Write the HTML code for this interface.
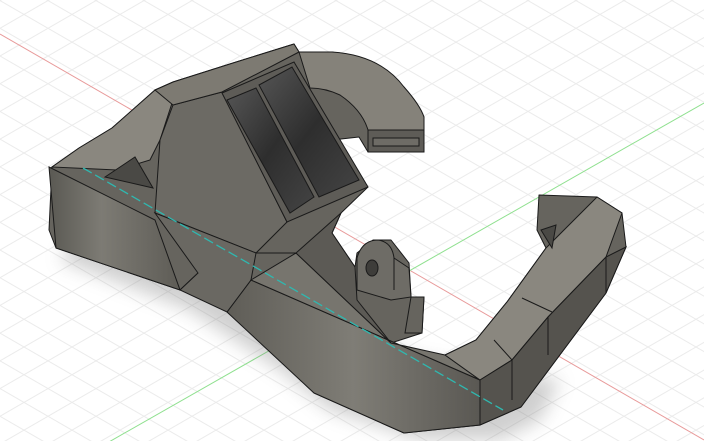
<!DOCTYPE html>
<html><head><meta charset="utf-8"><style>html,body{margin:0;padding:0;background:#fff}svg{display:block}</style></head>
<body>
<svg width="704" height="441" viewBox="0 0 704 441" xmlns="http://www.w3.org/2000/svg">
<defs>
<pattern id="ga" width="400" height="24" patternUnits="userSpaceOnUse" patternTransform="rotate(30)">
<line x1="0" y1="0.5" x2="400" y2="0.5" stroke="#ebebeb" stroke-width="1"/>
</pattern>
<pattern id="gb" width="400" height="24" patternUnits="userSpaceOnUse" patternTransform="rotate(-30)">
<line x1="0" y1="0.5" x2="400" y2="0.5" stroke="#ebebeb" stroke-width="1"/>
</pattern>
<filter id="bl" x="-20%" y="-20%" width="140%" height="140%"><feGaussianBlur stdDeviation="9"/></filter>
<linearGradient id="slot" x1="0" y1="0" x2="1" y2="1"><stop offset="0" stop-color="#555"/><stop offset="0.5" stop-color="#2e2e2e"/><stop offset="1" stop-color="#444"/></linearGradient>
<linearGradient id="side" x1="0" y1="0" x2="1" y2="0"><stop offset="0" stop-color="#5a5953"/><stop offset="0.4" stop-color="#7d7b74"/><stop offset="1" stop-color="#5e5c56"/></linearGradient>
<linearGradient id="uf" x1="0" y1="0" x2="1" y2="0"><stop offset="0" stop-color="#5f5d57"/><stop offset="0.5" stop-color="#7f7d76"/><stop offset="1" stop-color="#5a5853"/></linearGradient>
</defs>
<rect width="704" height="441" fill="#fff"/>
<rect width="704" height="441" fill="url(#ga)"/>
<rect width="704" height="441" fill="url(#gb)"/>
<line x1="0" y1="34" x2="704" y2="440" stroke="#e89a9a" stroke-width="1"/>
<line x1="704" y1="103" x2="72" y2="463" stroke="#8fe08f" stroke-width="1"/>
<g filter="url(#bl)" opacity="0.35">
<polygon points="60,260 190,310 280,370 330,410 420,440 500,440 540,420 560,380 420,360 300,300 200,270 80,230" fill="#777"/>
</g>
<polygon fill="#66645e" stroke="#1a1a1a" stroke-width="1" stroke-linejoin="round" points="49,230 56,248 180,290 198,273 227,312 269,350 314,393 404,433 480,425 521,407 606,293 626,247 622,213 597,197 539,195 537,230 546,248 507,302 476,340 445,355 413,355 391,343 422,333 424,297 411,297 409,263 391,240 373,240 357,253 355,267 332,233 341,213 368,187 359,178 332,140 359,137 368,152 424,152 424,117 404,87 368,60 332,52 299,52 294,44 233,63 173,82 155,90 112,128 79,148 52,167"/>
<polygon fill="url(#side)" stroke="#1a1a1a" stroke-width="1" points="49,167 155,220 180,290 56,248"/>
<polygon fill="#8a877f" stroke="#1a1a1a" stroke-width="1" points="79,148 112,128 155,90 173,100 160,140 150,160 117,170 52,167"/>
<polygon fill="#4a4945" stroke="#1a1a1a" stroke-width="1" points="105,177 135,157 153,188"/>
<polygon fill="#6c6a64" stroke="#1a1a1a" stroke-width="1" points="173,105 222,92 287,222 256,253 155,213 160,140"/>
<polygon fill="#7d7a72" stroke="#1a1a1a" stroke-width="1" points="155,90 173,82 233,63 294,44 299,52 222,92 173,105"/>
<polygon fill="#5e5c57" stroke="#1a1a1a" stroke-width="1" points="222,93 294,62 368,187 287,222"/>
<polygon fill="url(#slot)" stroke="#1a1a1a" stroke-width="1" points="227,100 256,88 314,197 290,213"/>
<polygon fill="url(#slot)" stroke="#1a1a1a" stroke-width="1" points="259,85 292,67 359,180 319,197"/>
<polygon fill="url(#uf)" stroke="#1a1a1a" stroke-width="1" points="227,312 251,280 480,380 480,425 404,433 314,393"/>
<polygon fill="#6a6862" stroke="#1a1a1a" stroke-width="1" points="198,273 180,290 227,312 251,280 256,253 155,213"/>
<polygon fill="#77756e" stroke="#1a1a1a" stroke-width="1" points="251,280 296,253 391,343 445,355 480,380"/>
<polygon fill="#5c5a55" stroke="#1a1a1a" stroke-width="1" points="256,253 296,253 341,213 332,233 355,267 357,300 391,343 296,253"/>
<polygon fill="#8a877f" stroke="#1a1a1a" stroke-width="1" points="445,355 476,340 507,302 546,248 597,197 622,213 606,257 548,317 512,360 480,380"/>
<polygon fill="#55534e" stroke="#1a1a1a" stroke-width="1" points="480,380 512,360 548,317 606,257 626,247 606,293 521,407 480,425"/>
<line x1="548" y1="317" x2="548" y2="355" stroke="#1a1a1a"/>
<line x1="512" y1="360" x2="512" y2="400" stroke="#1a1a1a"/>
<line x1="606" y1="257" x2="606" y2="293" stroke="#1a1a1a"/>
<polygon fill="#4a4945" stroke="#1a1a1a" stroke-width="1" points="541,230 556,225 552,248"/>
<line x1="522" y1="298" x2="552" y2="312" stroke="#1a1a1a"/>
<line x1="494" y1="340" x2="512" y2="360" stroke="#1a1a1a"/>
<path d="M357,290 L357,258 Q362,240 378,240 Q392,242 394,258 L409,268 L411,297 L391,300 Z" fill="#6e6c66" stroke="#1a1a1a" stroke-width="1"/>
<path d="M394,258 L394,290" stroke="#1a1a1a"/>
<ellipse cx="372" cy="268" rx="6" ry="8" fill="#3e3d3a" stroke="#1a1a1a"/>
<polygon fill="#66645e" stroke="#1a1a1a" stroke-width="1" points="411,297 424,297 422,333 405,333"/>
<path d="M299,52 L332,52 Q380,55 404,87 Q420,105 424,117 L424,130 L368,130 Q362,110 340,95 Q325,88 310,88 Z" fill="#85827a" stroke="#1a1a1a" stroke-width="1"/>
<polygon fill="#5e5c57" stroke="#1a1a1a" stroke-width="1" points="368,130 424,130 424,152 368,152"/>
<rect x="373" y="138" width="46" height="8" fill="#6e6c66" stroke="#1a1a1a" stroke-width="1"/>
<line x1="83" y1="168" x2="503" y2="410" stroke="#2fb8b0" stroke-width="1.3" stroke-dasharray="10,4"/>
</svg>
</body></html>
